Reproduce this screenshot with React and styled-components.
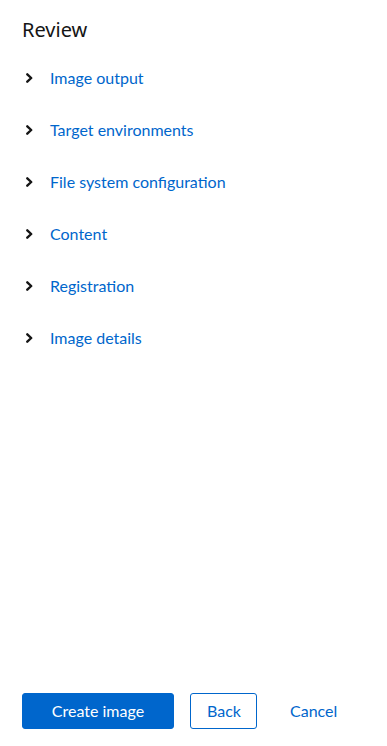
import React from "react";
import styled, { createGlobalStyle } from "styled-components";

const Global = createGlobalStyle`
  html, body { margin: 0; padding: 0; background: #fff; }
  body { font-family: Lato, "Liberation Sans", sans-serif; }
  * { box-sizing: border-box; }
`;

const Page = styled.div`
  height: 746px;
  display: flex;
  flex-direction: column;
  padding: 15px 22px 17px 22px;
`;

const Title = styled.h1`
  margin: 0 0 7px 0;
  font-family: "Noto Sans", sans-serif;
  font-size: 20px;
  font-weight: 400;
  line-height: 30px;
  color: #151515;
`;

const List = styled.div`
  display: flex;
  flex-direction: column;
  flex: 1;
`;

const Toggle = styled.button`
  display: flex;
  align-items: center;
  height: 52px;
  padding: 0 0 2px 0;
  border: 0;
  background: none;
  font-family: inherit;
  font-size: 16px;
  color: #0066cc;
  cursor: pointer;
  text-align: left;
`;

const Chevron = styled.span`
  width: 28px;
  display: flex;
  align-items: center;
  padding-left: 4px;
  padding-top: 2px;
`;

const Footer = styled.div`
  display: flex;
  align-items: center;
  gap: 16px;
`;

const Button = styled.button`
  height: 36px;
  width: ${(p) => (p.$w ? `${p.$w}px` : "auto")};
  padding: 0 16px 1px 16px;
  white-space: nowrap;
  font-family: inherit;
  font-size: 16px;
  border-radius: 3px;
  cursor: pointer;
  border: 1px solid ${(p) => (p.$variant === "link" ? "transparent" : "#0066cc")};
  background: ${(p) => (p.$variant === "primary" ? "#0066cc" : "transparent")};
  color: ${(p) => (p.$variant === "primary" ? "#fff" : "#0066cc")};
`;

const items = [
  "Image output",
  "Target environments",
  "File system configuration",
  "Content",
  "Registration",
  "Image details",
];

function ChevronIcon() {
  return (
    <svg width="7" height="10" viewBox="0 0 7 10">
      <path d="M1.3 1.3 L5.2 5 L1.3 8.7" fill="none" stroke="#151515" strokeWidth="2.4" strokeLinecap="round" strokeLinejoin="round" />
    </svg>
  );
}

export default function App() {
  return (
    <>
      <Global />
      <Page>
        <Title>Review</Title>
        <List>
          {items.map((t) => (
            <Toggle key={t}>
              <Chevron>
                <ChevronIcon />
              </Chevron>
              {t}
            </Toggle>
          ))}
        </List>
        <Footer>
          <Button $variant="primary" $w={152}>Create image</Button>
          <Button $variant="secondary" $w={67}>Back</Button>
          <Button $variant="link">Cancel</Button>
        </Footer>
      </Page>
    </>
  );
}
